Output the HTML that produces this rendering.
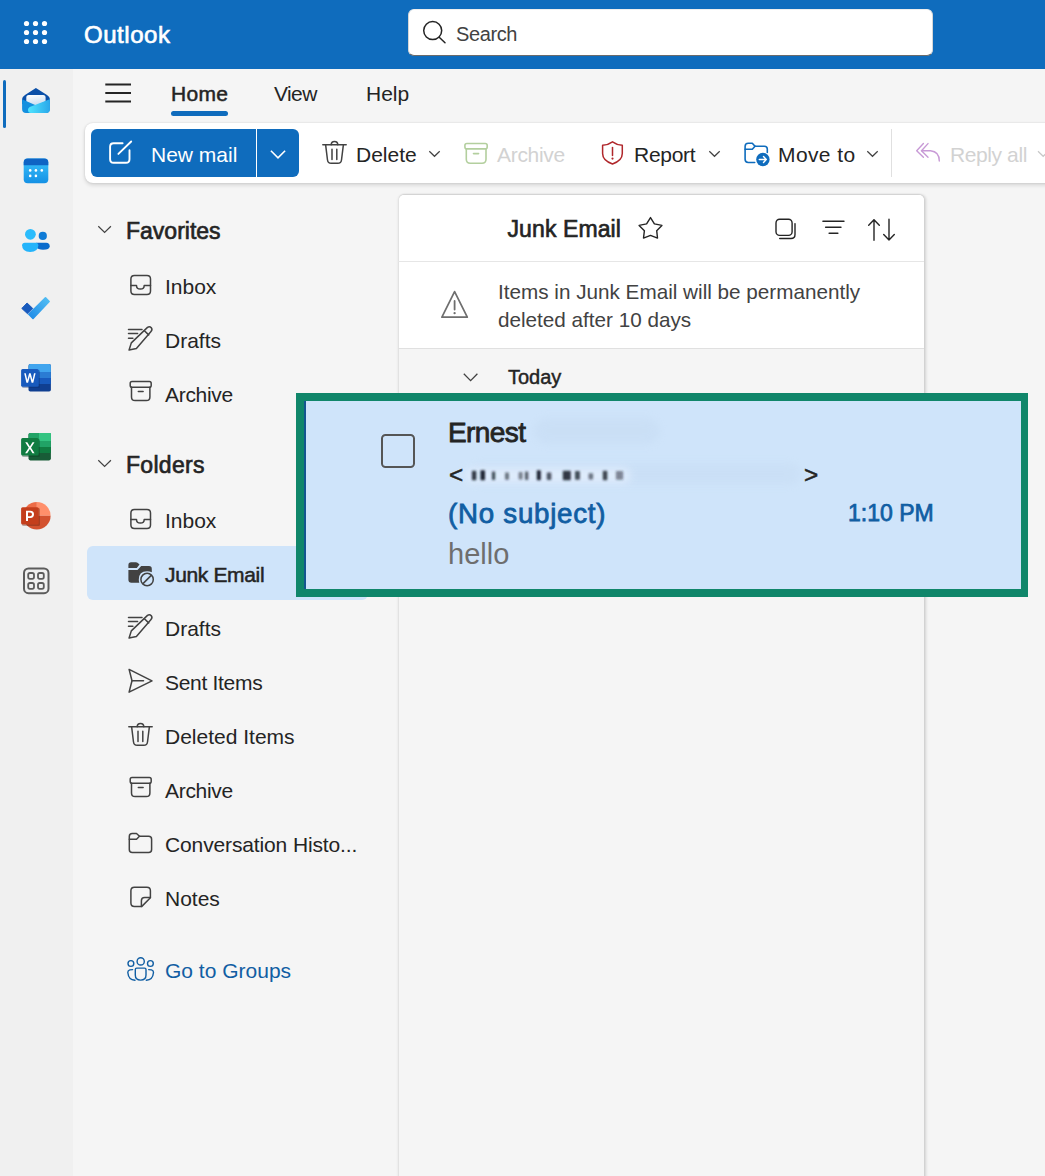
<!DOCTYPE html>
<html><head><meta charset="utf-8">
<style>
*{margin:0;padding:0;box-sizing:border-box}
html,body{width:1045px;height:1176px;overflow:hidden;background:#f5f5f5;font-family:"Liberation Sans",sans-serif;color:#242424}
.a{position:absolute}
.t{position:absolute;white-space:nowrap;line-height:1}
svg{position:absolute;overflow:visible}
.t{top:calc(var(--b) - var(--f)*0.8465);font-size:var(--f)}
.b{font-weight:400;-webkit-text-stroke-width:0.65px}

#hdr{left:0;top:0;width:1045px;height:69px;background:#0f6cbd}
#rail{left:0;top:69px;width:73px;height:1107px;background:#f0f0f0}
#search{left:408px;top:9px;width:525px;height:47px;background:#fff;border-radius:6px;border:1px solid #d6d6d6;border-top-color:#eee;border-bottom:1.5px solid #6b6b6b}
#ribbon{left:85px;top:123px;width:1000px;height:60px;background:#fff;border-radius:8px;box-shadow:0 0 2px rgba(0,0,0,.12),0 2px 4px rgba(0,0,0,.14)}
#newmail{left:91px;top:129px;width:208px;height:48px;background:#0f6cbd;border-radius:6px}
#card{left:399px;top:195px;width:525px;height:1000px;background:#f5f5f5;border-radius:5px 5px 0 0;box-shadow:-1px 0 3px rgba(0,0,0,.07),1.5px 0 3px rgba(0,0,0,.14),0 -0.5px 1.5px rgba(0,0,0,.08)}
#cardtop{left:399px;top:195px;width:525px;height:153px;background:#fff;border-radius:5px 5px 0 0}
#junksel{left:87px;top:546px;width:281px;height:54px;background:#cfe4fa;border-radius:6px}
#green{left:296px;top:393px;width:732px;height:204px;border:8px solid #10866a;border-right-width:7px}
#inner{left:304px;top:401px;width:717px;height:188px;background:#cfe4fa;border-left:2.5px solid #13558f}
</style></head><body>
<div id="hdr" class="a"></div>
<div id="rail" class="a"></div>
<div id="search" class="a"></div>
<div id="ribbon" class="a"></div>
<div id="newmail" class="a"></div>
<div id="card" class="a"></div>
<div id="cardtop" class="a"></div>
<div id="junksel" class="a"></div>
<!-- header -->
<div class="t b" style="left:84px;--b:43.3px;--f:24px;letter-spacing:0.55px;color:#fff">Outlook</div>
<div class="t" style="left:456px;--b:41px;--f:20px;letter-spacing:-0.4px;color:#424242">Search</div>
<!-- tabs -->
<div class="t b" style="left:171px;--b:101px;--f:21px;letter-spacing:0.3px;-webkit-text-stroke-width:0.5px">Home</div>
<div class="a" style="left:171px;top:111px;width:57px;height:5px;border-radius:3px;background:#0f6cbd"></div>
<div class="t" style="left:274px;--b:101px;--f:21px;letter-spacing:-0.6px">View</div>
<div class="t" style="left:366px;--b:101px;--f:21px">Help</div>
<!-- ribbon -->
<div class="t" style="left:151px;--b:162px;--f:21px;color:#fff">New mail</div>
<div class="a" style="left:256px;top:129px;width:1px;height:48px;background:#fff"></div>
<div class="t" style="left:356px;--b:162px;--f:21px">Delete</div>
<div class="t" style="left:497px;--b:162px;--f:21px;letter-spacing:-0.3px;color:#d2d2d2">Archive</div>
<div class="t" style="left:634px;--b:162px;--f:21px;letter-spacing:-0.27px">Report</div>
<div class="t" style="left:778px;--b:162px;--f:21px;letter-spacing:0.4px">Move to</div>
<div class="a" style="left:891px;top:129px;width:1px;height:48px;background:#e0e0e0"></div>
<div class="t" style="left:950px;--b:162px;--f:21px;letter-spacing:-0.4px;color:#d2d2d2">Reply all</div>
<!-- nav -->
<div class="t b" style="left:126px;--b:239px;--f:23px">Favorites</div>
<div class="t" style="left:165px;--b:294px;--f:21px">Inbox</div>
<div class="t" style="left:165px;--b:348px;--f:21px">Drafts</div>
<div class="t" style="left:165px;--b:402px;--f:21px;letter-spacing:-0.3px">Archive</div>
<div class="t b" style="left:126px;--b:473px;--f:23px;letter-spacing:0.3px">Folders</div>
<div class="t" style="left:165px;--b:528px;--f:21px">Inbox</div>
<div class="t b" style="left:165px;--b:582px;--f:21px;letter-spacing:-0.35px;-webkit-text-stroke-width:0.5px">Junk Email</div>
<div class="t" style="left:165px;--b:636px;--f:21px">Drafts</div>
<div class="t" style="left:165px;--b:690px;--f:21px;letter-spacing:-0.3px">Sent Items</div>
<div class="t" style="left:165px;--b:744px;--f:21px">Deleted Items</div>
<div class="t" style="left:165px;--b:798px;--f:21px;letter-spacing:-0.3px">Archive</div>
<div class="t" style="left:165px;--b:852px;--f:21px;letter-spacing:-0.13px">Conversation Histo...</div>
<div class="t" style="left:165px;--b:906px;--f:21px">Notes</div>
<div class="t" style="left:165px;--b:978px;--f:21px;color:#115ea3">Go to Groups</div>
<!-- card -->
<div class="a" style="left:398px;top:261px;width:526px;height:1px;background:#e6e6e6"></div>
<div class="a" style="left:398px;top:348px;width:526px;height:1px;background:#e0e0e0"></div>
<div class="t b" style="left:507.5px;--b:237px;--f:23px;letter-spacing:0.1px">Junk Email</div>
<div class="t" style="left:498px;--b:300px;--f:20.7px;color:#424242">Items in Junk Email will be permanently</div>
<div class="t" style="left:498px;--b:328px;--f:20.7px;color:#424242">deleted after 10 days</div>
<div class="t b" style="left:508px;--b:384px;--f:20px;-webkit-text-stroke-width:0.45px">Today</div>

<svg width="1045" height="1176" style="left:0;top:0" viewBox="0 0 1045 1176">
<defs>
<linearGradient id="gLetter" x1="0" y1="0" x2="0.3" y2="1"><stop offset="0" stop-color="#fff"/><stop offset="1" stop-color="#c9dcf0"/></linearGradient>
<linearGradient id="gFrontR" x1="0" y1="0" x2="1" y2="0"><stop offset="0" stop-color="#50e6ff"/><stop offset="1" stop-color="#2aa7ea"/></linearGradient>
<linearGradient id="gCal" x1="0" y1="0" x2="0" y2="1"><stop offset="0" stop-color="#3bc3fc"/><stop offset="1" stop-color="#1490e4"/></linearGradient>
<linearGradient id="gTodo" x1="0" y1="1" x2="1" y2="0"><stop offset="0" stop-color="#1b87e6"/><stop offset="1" stop-color="#56c2f4"/></linearGradient>
</defs>
<!-- header waffle -->
<g fill="#fff">
<circle cx="26.5" cy="23.5" r="2.6"/><circle cx="35.5" cy="23.5" r="2.6"/><circle cx="44.5" cy="23.5" r="2.6"/>
<circle cx="26.5" cy="32.5" r="2.6"/><circle cx="35.5" cy="32.5" r="2.6"/><circle cx="44.5" cy="32.5" r="2.6"/>
<circle cx="26.5" cy="41.5" r="2.6"/><circle cx="35.5" cy="41.5" r="2.6"/><circle cx="44.5" cy="41.5" r="2.6"/>
</g>
<!-- search icon -->
<g fill="none" stroke="#242424" stroke-width="1.5" stroke-linecap="round">
<circle cx="432.7" cy="30.6" r="9"/><path d="M439.2,37.3 L445,42.8"/>
</g>
<!-- rail indicator -->
<rect x="3" y="80" width="3" height="48" rx="1.5" fill="#0f6cbd"/>
<!-- mail icon -->
<g>
<path d="M35.9,88.1 L47,95 Q49.9,96.8 49.9,99 L49.9,104 L22.1,104 L22.1,99 Q22.1,96.8 25,95 Z" fill="#0a4fa8"/>
<rect x="26.3" y="95" width="19.3" height="11" rx="2.5" fill="url(#gLetter)"/>
<path d="M22.1,99.2 L36.3,105.5 L49.9,99.2 L49.9,109 Q49.9,112.9 46,112.9 L26,112.9 Q22.1,112.9 22.1,109 Z" fill="#1490df"/>
<path d="M49.9,99.2 L49.9,109 Q49.9,112.9 46,112.9 L31,112.9 Q28,112.9 28,110 Q28,107.5 31,106.5 Z" fill="url(#gFrontR)"/>
</g>
<!-- calendar -->
<g>
<rect x="23.7" y="158.6" width="24.6" height="24.7" rx="4" fill="url(#gCal)"/>
<path d="M23.7,165.3 L23.7,162.6 Q23.7,158.6 27.7,158.6 L44.3,158.6 Q48.3,158.6 48.3,162.6 L48.3,165.3 Z" fill="#0f64c4"/>
<g fill="#fff"><circle cx="30.2" cy="170.4" r="1.3"/><circle cx="35.9" cy="170.4" r="1.3"/><circle cx="41.8" cy="170.4" r="1.3"/><circle cx="30.2" cy="175.9" r="1.3"/><circle cx="35.9" cy="175.9" r="1.3"/></g>
</g>
<!-- people -->
<g>
<circle cx="42.8" cy="235.9" r="4.1" fill="#0f7bd6"/>
<path d="M36,242.8 L46.2,242.8 Q49.7,242.8 49.7,246.3 Q49.7,249.8 43,249.8 Q38,249.8 36,247 Z" fill="#0a6bcc"/>
<circle cx="30.4" cy="234.3" r="5.4" fill="#2bbcfc"/>
<path d="M24.8,242.8 L35.8,242.8 Q38.3,242.8 38.3,245.3 Q38.3,251.9 30.2,251.9 Q22.1,251.9 22.1,245.3 Q22.1,242.8 24.8,242.8 Z" fill="#24b4fb"/>
</g>
<!-- todo -->
<g>
<path d="M21.8,308.4 L27.1,303 L32.8,308.5 L27.6,313.8 Z" fill="#185abd" stroke="#185abd" stroke-width="1" stroke-linejoin="round"/>
<path d="M27.8,314.3 L44.9,297.3 Q45.5,296.7 46.1,297.3 L49.7,300.9 Q50.3,301.5 49.7,302.1 L33.6,319 Q33,319.6 32.4,319 Z" fill="url(#gTodo)"/>
</g>
<!-- word -->
<g>
<rect x="28.5" y="364.1" width="22.4" height="27.4" rx="1.8" fill="#103f91"/>
<path d="M28.5,372 L28.5,365.9 Q28.5,364.1 30.3,364.1 L49.1,364.1 Q50.9,364.1 50.9,365.9 L50.9,372 Z" fill="#41a5ee"/>
<rect x="28.5" y="372" width="22.4" height="6" fill="#2b7cd3"/>
<rect x="28.5" y="378" width="22.4" height="6" fill="#185abd"/>
<rect x="22" y="370" width="18" height="18" rx="1.5" fill="#0b2a66" opacity="0.35"/>
<rect x="21.1" y="369.1" width="17.6" height="17.6" rx="1.5" fill="#185abd"/>
<path d="M24.2,373.3 L26.4,382.8 L28.1,382.8 L29.9,376.3 L31.6,382.8 L33.3,382.8 L35.6,373.3 L34,373.3 L32.5,380 L30.7,373.3 L29.1,373.3 L27.3,380 L25.8,373.3 Z" fill="#fff"/>
</g>
<!-- excel -->
<g>
<rect x="28.5" y="433" width="22.4" height="27.4" rx="1.8" fill="#185c37"/>
<path d="M28.5,441 L28.5,434.8 Q28.5,433 30.3,433 L49.1,433 Q50.9,433 50.9,434.8 L50.9,441 Z" fill="#21a366"/>
<rect x="39" y="433" width="11.9" height="8" fill="#33c481"/>
<rect x="28.5" y="441" width="22.4" height="6" fill="#21a366"/>
<rect x="28.5" y="447" width="22.4" height="6" fill="#107c41"/>
<rect x="22" y="439" width="18" height="18" rx="1.5" fill="#0a3a20" opacity="0.35"/>
<rect x="21.1" y="438" width="17.6" height="17.6" rx="1.5" fill="#107c41"/>
<path d="M25.2,442.3 L27.3,442.3 L29.9,446.6 L32.5,442.3 L34.5,442.3 L31,447.8 L34.6,453.3 L32.5,453.3 L29.9,449 L27.2,453.3 L25.1,453.3 L28.8,447.8 Z" fill="#fff"/>
</g>
<!-- ppt -->
<g>
<path d="M36.8,515.8 L36.8,502 A13.8,13.8 0 0 1 50.6,515.8 Z" fill="#ff8f6b"/>
<path d="M36.8,515.8 L23,515.8 A13.8,13.8 0 0 1 36.8,502 Z" fill="#ed6c47"/>
<path d="M23,515.8 L50.6,515.8 A13.8,13.8 0 0 1 23,515.8 Z" fill="#d35230"/>
<rect x="22" y="508.1" width="18" height="18" rx="1.5" fill="#5a1a08" opacity="0.35"/>
<rect x="21.1" y="507.2" width="17.6" height="17.4" rx="1.5" fill="#c43e1c"/>
<path d="M26,510.8 L30.3,510.8 Q34,510.8 34,514.3 Q34,517.9 30.3,517.9 L28,517.9 L28,521 L26,521 Z M28,512.5 L28,516.2 L30.1,516.2 Q32,516.2 32,514.35 Q32,512.5 30.1,512.5 Z" fill="#fff" fill-rule="evenodd"/>
</g>
<!-- apps -->
<g fill="none" stroke="#5c5c5c">
<rect x="24" y="568.5" width="24.5" height="24.7" rx="4.5" stroke-width="2"/>
<rect x="28.2" y="573" width="5.8" height="5.9" rx="1.8" stroke-width="1.8"/>
<rect x="38" y="573" width="5.8" height="5.9" rx="1.8" stroke-width="1.8"/>
<rect x="28.2" y="583" width="5.8" height="5.9" rx="1.8" stroke-width="1.8"/>
<rect x="38" y="583" width="5.8" height="5.9" rx="1.8" stroke-width="1.8"/>
</g>
<!-- hamburger -->
<g stroke="#242424" stroke-width="1.8">
<path d="M105.3,84.5 H131 M105.3,93 H131 M105.3,101.5 H131"/>
</g>
<!-- compose icon -->
<g fill="none" stroke="#fff" stroke-width="1.9" stroke-linecap="round">
<path d="M122.6,143.2 H113.6 Q110.1,143.2 110.1,146.7 V159.2 Q110.1,162.7 113.6,162.7 H126 Q129.5,162.7 129.5,159.2 V150.3"/>
<path d="M118.4,153.9 L131.2,141.5"/>
</g>
<path d="M270.9,150.8 L278,157.8 L285.1,150.8" fill="none" stroke="#fff" stroke-width="1.6"/>
<!-- delete -->
<g fill="none" stroke="#424242" stroke-width="1.5" stroke-linecap="round" stroke-linejoin="round">
<path d="M322.8,144.7 H346.2"/>
<path d="M331.2,144.7 A3.3,3.3 0 0 1 337.8,144.7"/>
<path d="M325.6,144.7 L327.5,160 Q327.9,163.3 331.2,163.3 H337.8 Q341.1,163.3 341.5,160 L343.4,144.7"/>
<path d="M332,149.3 V159.5 M336.8,149.3 V159.5"/>
</g>
<path d="M429.3,151.3 L434.5,156.3 L439.7,151.3" fill="none" stroke="#424242" stroke-width="1.2"/>
<!-- archive (disabled, green) -->
<g fill="none" stroke="#b3cf9e" stroke-width="1.6" stroke-linecap="round">
<rect x="464.9" y="143.5" width="22.3" height="5.4" rx="2"/>
<path d="M466.3,148.9 V159.2 Q466.3,163.2 470.3,163.2 H482 Q486,163.2 486,159.2 V148.9"/>
<path d="M473.5,153.6 H478.6"/>
</g>
<!-- report shield -->
<g fill="none" stroke="#b0272b" stroke-width="1.5" stroke-linejoin="round" stroke-linecap="round">
<path d="M612.5,141.8 Q607.5,145.3 602.6,145.3 V153.5 Q602.6,160.5 612.5,164 Q622.3,160.5 622.3,153.5 V145.3 Q617.5,145.3 612.5,141.8 Z"/>
<path d="M612.5,147.4 V155.6"/>
</g>
<circle cx="612.5" cy="158.6" r="1.1" fill="#b0272b"/>
<path d="M709.3,151.3 L714.5,156.3 L719.7,151.3" fill="none" stroke="#424242" stroke-width="1.2"/>
<!-- move to -->
<g fill="none" stroke="#0f6cbd" stroke-width="1.6" stroke-linecap="round" stroke-linejoin="round">
<path d="M754.7,162.5 H748.3 Q745.1,162.5 745.1,159.3 V146.4 Q745.1,143.2 748.3,143.2 H752.3 L755,146.2 H764.4 Q767.3,146.2 767.3,149.1 V152.4"/>
<path d="M745.1,149.3 H752.3 L755,146.2"/>
</g>
<circle cx="762.9" cy="159.5" r="6.7" fill="#0f6cbd"/>
<path d="M759.3,159.5 H766.3 M763.5,156.6 L766.3,159.5 L763.5,162.4" fill="none" stroke="#fff" stroke-width="1.4" stroke-linecap="round" stroke-linejoin="round"/>
<path d="M867.3,151.3 L872.5,156.3 L877.7,151.3" fill="none" stroke="#424242" stroke-width="1.2"/>
<!-- reply all -->
<g fill="none" stroke="#c89ad6" stroke-width="1.4" stroke-linecap="round" stroke-linejoin="round">
<path d="M923.4,143.6 L916.7,150.7 L923.4,157.2"/>
<path d="M928,143.6 L921.5,150.7 L928,157.2"/>
<path d="M921.5,150.7 H930.5 Q939.3,151.5 939.3,161"/>
</g>
<path d="M1038,151.3 L1043.2,156.3 L1048.4,151.3" fill="none" stroke="#c8c8c8" stroke-width="1.2"/>
<!-- nav chevrons -->
<g fill="none" stroke="#424242" stroke-width="1.2">
<path d="M98.3,226.2 L104.6,232.4 L110.9,226.2"/>
<path d="M98.3,460.2 L104.6,466.4 L110.9,460.2"/>
</g>
<!-- nav icons -->
<g fill="none" stroke="#424242" stroke-width="1.5" stroke-linecap="round" stroke-linejoin="round">
<!-- inbox fav -->
<path d="M134.4,275.5 H147 Q150.5,275.5 150.5,279 V290.9 Q150.5,294.4 147,294.4 H134.4 Q130.9,294.4 130.9,290.9 V279 Q130.9,275.5 134.4,275.5 Z"/>
<path d="M130.9,285.5 H136.5 Q136.5,289.1 140.35,289.1 Q144.2,289.1 144.2,285.5 H150.5"/>
<!-- drafts fav -->
<path d="M128.5,329.4 H142 M128.5,333.5 H137.6 M128.5,338.2 H132.9"/>
<path d="M129.1,350 L131.3,342.9 L147.5,327.4 Q149.6,325.9 151.3,327.8 Q152.8,329.7 150.8,331.8 L136.4,348.4 Z"/>
<path d="M144.4,330.7 L148.7,334.9"/>
<!-- archive fav -->
<rect x="130.2" y="381.6" width="21" height="5.6" rx="1.8"/>
<path d="M131.5,387.2 V397 Q131.5,400.6 135.1,400.6 H146.3 Q149.9,400.6 149.9,397 V387.2"/>
<path d="M138.3,391.6 H143.1"/>
<!-- inbox folders -->
<path d="M134.4,509.5 H147 Q150.5,509.5 150.5,513 V524.9 Q150.5,528.4 147,528.4 H134.4 Q130.9,528.4 130.9,524.9 V513 Q130.9,509.5 134.4,509.5 Z"/>
<path d="M130.9,519.5 H136.5 Q136.5,523.1 140.35,523.1 Q144.2,523.1 144.2,519.5 H150.5"/>
<!-- drafts folders -->
<path d="M128.5,617.4 H142 M128.5,621.5 H137.6 M128.5,626.2 H132.9"/>
<path d="M129.1,638 L131.3,630.9 L147.5,615.4 Q149.6,613.9 151.3,615.8 Q152.8,617.7 150.8,619.8 L136.4,636.4 Z"/>
<path d="M144.4,618.7 L148.7,622.9"/>
<!-- sent -->
<path d="M129.1,669.4 L152,680.8 L129.1,692.1 L132,680.8 Z"/>
<path d="M132,680.8 H143.5"/>
<!-- deleted -->
<path d="M128.8,726.7 H152.2"/>
<path d="M137.2,726.7 A3.3,3.3 0 0 1 143.8,726.7"/>
<path d="M131.6,726.7 L133.5,742 Q133.9,745.3 137.2,745.3 H143.8 Q147.1,745.3 147.5,742 L149.4,726.7"/>
<path d="M138,731.3 V741.5 M142.8,731.3 V741.5"/>
<!-- archive folders -->
<rect x="130.2" y="777.6" width="21" height="5.6" rx="1.8"/>
<path d="M131.5,783.2 V793 Q131.5,796.6 135.1,796.6 H146.3 Q149.9,796.6 149.9,793 V783.2"/>
<path d="M138.3,787.6 H143.1"/>
<!-- conversation folder -->
<path d="M129.3,836.5 Q129.3,833.5 132.3,833.5 H136.5 L139.5,836.3 H148.6 Q151.6,836.3 151.6,839.3 V849.5 Q151.6,852.5 148.6,852.5 H132.3 Q129.3,852.5 129.3,849.5 Z"/>
<path d="M129.3,839.2 H136.5 L139.5,836.3"/>
<!-- notes -->
<path d="M130.9,890.7 Q130.9,887.2 134.4,887.2 H146.9 Q150.4,887.2 150.4,890.7 V897.8 L141.6,906.6 H134.4 Q130.9,906.6 130.9,903.1 Z"/>
<path d="M150.4,897.6 H144.6 Q141.4,897.6 141.4,900.8 V906.6"/>
</g>
<!-- junk (filled) -->
<g fill="#424242">
<path d="M128.4,565 Q128.4,562.3 131.1,562.3 L136,562.3 Q137.5,562.3 139,564 L139.5,564.5 L136.8,568 L128.4,568 Z"/>
<path d="M128.4,569.9 L137.5,569.9 L141.2,566.1 L149,566.1 Q151.8,566.1 151.8,568.9 L151.8,572.3 Q149.8,571.2 147.1,571.2 Q138.8,571.2 138.8,579.5 Q138.8,581.3 139.3,582.8 L131.4,582.8 Q128.4,582.8 128.4,579.8 Z"/>
</g>
<g fill="none" stroke="#424242" stroke-width="1.5">
<circle cx="147.1" cy="579.5" r="6.2"/>
<path d="M143,583.6 L151.2,575.4"/>
</g>
<!-- groups -->
<g fill="none" stroke="#115ea3" stroke-width="1.4" stroke-linecap="round">
<circle cx="140.7" cy="961.4" r="3.6"/>
<circle cx="130.9" cy="963.5" r="2.9"/>
<circle cx="150.4" cy="963.5" r="2.9"/>
<path d="M136.7,968.1 H144.6 Q146,968.1 146,969.5 V975 Q146,980.1 140.65,980.1 Q135.3,980.1 135.3,975 V969.5 Q135.3,968.1 136.7,968.1 Z"/>
<path d="M132.6,969.6 L129.8,969.9 Q127.7,970.5 127.8,972.5 Q128.5,980 135,980.3"/>
<path d="M148.7,969.6 L151.5,969.9 Q153.6,970.5 153.5,972.5 Q152.8,980 146.3,980.3"/>
</g>
<!-- card header icons -->
<g fill="none" stroke="#242424" stroke-width="1.4" stroke-linejoin="round" stroke-linecap="round">
<path d="M650.5,217.6 L654.4,223.9 L661.9,225.4 L656.7,230.7 L657.5,238.1 L650.5,235.4 L643.5,238.1 L644.4,230.7 L639.1,225.4 L646.6,223.9 Z"/>
<rect x="776" y="219.3" width="16.1" height="16.1" rx="3.6"/>
<path d="M795,223.6 V234.5 Q795,238.5 791,238.5 H779.7"/>
<path d="M822.9,221.3 H844 M825.6,227.3 H841 M829.1,233.3 H837.9"/>
<path d="M874,240.3 V219.7 M868.7,225.2 L874,219.7 L879.3,225.2"/>
<path d="M889,219.3 V240 M883.7,234.6 L889,240 L894.3,234.6"/>
</g>
<!-- warning -->
<g fill="none" stroke="#6e6e6e" stroke-width="1.7" stroke-linejoin="round">
<path d="M454.6,291.6 L467.3,317.2 H441.9 Z"/>
<path d="M454.6,301 V309.5" stroke-linecap="round" stroke-width="1.8"/>
</g>
<circle cx="454.6" cy="313.2" r="1.15" fill="#6e6e6e"/>
<!-- today chevron -->
<path d="M463.8,373.8 L470.6,380.6 L477.4,373.8" fill="none" stroke="#424242" stroke-width="1.3"/>
</svg>
<div id="green" class="a"></div>
<div id="inner" class="a"></div>
<svg width="1045" height="1176" style="left:0;top:0" viewBox="0 0 1045 1176">
<defs><filter id="bl3" x="-50%" y="-50%" width="200%" height="200%"><feGaussianBlur stdDeviation="4"/></filter>
<filter id="bl1" x="-20%" y="-50%" width="140%" height="200%"><feGaussianBlur stdDeviation="0.9"/></filter></defs>
<rect x="534" y="418" width="126" height="26" rx="13" fill="#bcd2ea" opacity="0.25" filter="url(#bl3)"/>
<rect x="470" y="463" width="330" height="22" rx="10" fill="#bcd2ea" opacity="0.22" filter="url(#bl3)"/>
<rect x="466" y="468" width="164" height="15" rx="6" fill="#e8f2ff" opacity="0.7" filter="url(#bl3)"/>
<g fill="#1d2430" filter="url(#bl1)"><rect x="471.9" y="470.7" width="4.4" height="9.5" rx="1" opacity="0.9"/><rect x="480.5" y="470.2" width="4.5" height="10.0" rx="1" opacity="1"/><rect x="491.9" y="471.5" width="3.3" height="8.4" rx="1" opacity="0.8"/><rect x="505.0" y="472.5" width="4.0" height="7.3" rx="1" opacity="0.6"/><rect x="518.6" y="472.0" width="4.0" height="7.5" rx="1" opacity="0.55"/><rect x="525.0" y="471.5" width="3.3" height="8.4" rx="1" opacity="0.7"/><rect x="536.8" y="470.2" width="4.0" height="10.0" rx="1" opacity="1"/><rect x="546.8" y="472.5" width="4.5" height="7.6" rx="1" opacity="0.75"/><rect x="562.8" y="470.7" width="8.0" height="9.5" rx="1" opacity="0.9"/><rect x="575.0" y="471.1" width="4.9" height="8.7" rx="1" opacity="0.8"/><rect x="588.6" y="473.3" width="4.5" height="6.2" rx="1" opacity="0.6"/><rect x="602.8" y="470.7" width="4.5" height="9.5" rx="1" opacity="0.85"/><rect x="615.9" y="471.1" width="7.3" height="8.7" rx="1" opacity="0.5"/></g>
</svg>
<div class="t b" style="left:448px;--b:443px;--f:28px;letter-spacing:-0.6px;-webkit-text-stroke-width:0.8px">Ernest</div>
<div class="t b" style="left:448px;--b:523px;--f:27.7px;letter-spacing:0.75px;-webkit-text-stroke-width:0.8px;color:#115ea3">(No subject)</div>
<div class="t b" style="left:848px;--b:521px;--f:23px;-webkit-text-stroke-width:0.75px;color:#115ea3">1:10 PM</div>
<div class="t" style="left:448px;--b:565px;--f:29px;color:#6e6e6e">hello</div>
<div class="t" style="left:449px;--b:483.3px;--f:24.4px;-webkit-text-stroke-width:0.5px">&lt;</div>
<div class="t" style="left:804px;--b:483.3px;--f:24.4px;-webkit-text-stroke-width:0.5px">&gt;</div>
<div class="a" style="left:381px;top:434px;width:34px;height:34px;border:2px solid #555;border-radius:4.5px"></div>

</body></html>
